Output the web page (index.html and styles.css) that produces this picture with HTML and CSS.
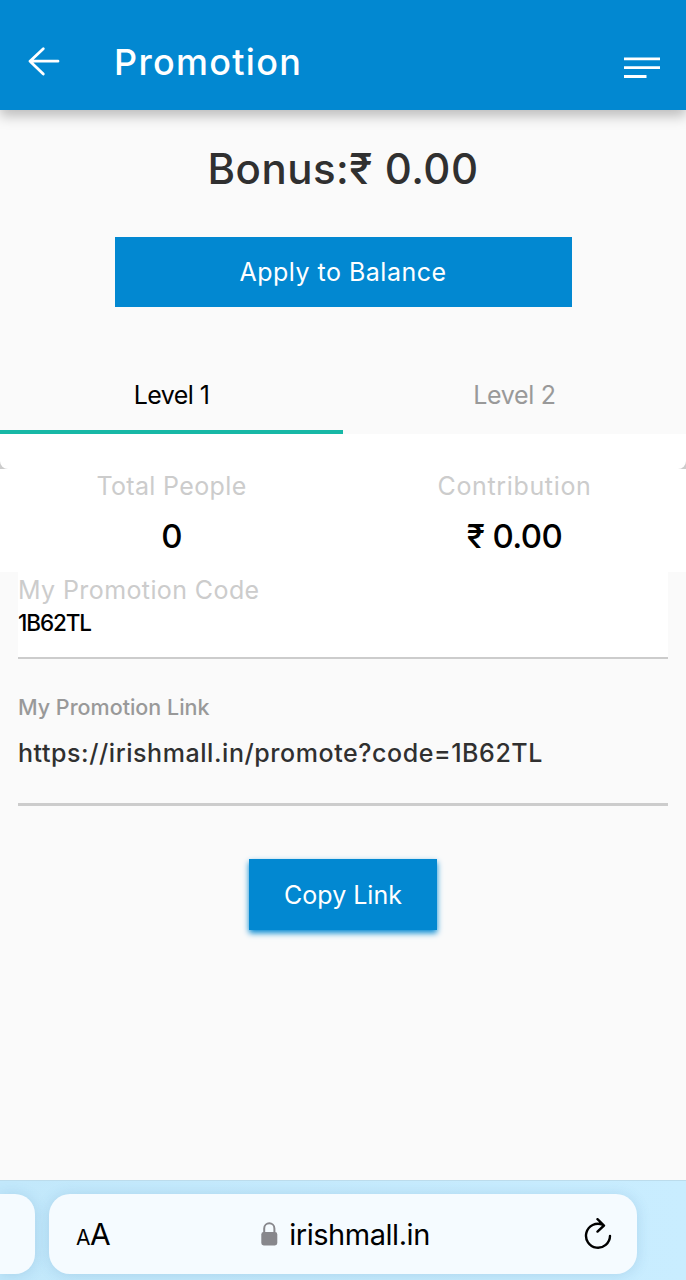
FILE: index.html
```html
<!DOCTYPE html>
<html lang="en">
<head>
    <meta charset="UTF-8">
    <meta name="viewport" content="width=device-width, initial-scale=1.0">
    <title>Promotion</title>
    <link rel="stylesheet" href="styles.css">
</head>
<body>
    <header class="navbar">
        <svg class="back" width="34" height="32" viewBox="0 0 34 32">
            <path d="M17.3 2.7 L4 15.2 L17.3 28 M4 15.2 H32" />
        </svg>
        <h1>Promotion</h1>
        <svg class="menu" width="36" height="22" viewBox="0 0 36 22">
            <path d="M0 1.9 H36 M0 10.7 H36 M0 19.5 H22.5" />
        </svg>
    </header>

    <main>
        <div class="bonus">Bonus:₹ 0.00</div>
        <button class="apply">Apply to Balance</button>

        <div class="tabs">
            <div class="tab active">Level 1</div>
            <div class="tab">Level 2</div>
        </div>
        <div class="edge"><div class="edge-inner"></div></div>

        <div class="stats">
            <div class="stat">
                <div class="label people">Total People</div>
                <div class="value">0</div>
            </div>
            <div class="stat">
                <div class="label contribution">Contribution</div>
                <div class="value">₹ 0.00</div>
            </div>
        </div>

        <div class="code-box">
            <div class="code-label">My Promotion Code</div>
            <div class="code">1B62TL</div>
        </div>

        <div class="link-box">
            <div class="link-label">My Promotion Link</div>
            <div class="link">https://irishmall.in/promote?code=1B62TL</div>
        </div>

        <button class="copy">Copy Link</button>
    </main>

    <footer class="browser">
        <div class="prev-tab"></div>
        <div class="address">
            <div class="aa"><span class="small-a">A</span><span class="big-a">A</span></div>
            <div class="site">
                <svg width="17" height="24" viewBox="0 0 17 24">
                    <path class="shackle" d="M3.2 11 V6.5 C3.2 -.4 13.4 -.4 13.4 6.5 V11" />
                    <rect x="0.3" y="10" width="16" height="13.5" rx="2.4" />
                </svg>
                <span class="domain">irishmall.in</span>
            </div>
            <svg class="reload" width="28" height="34" viewBox="0 0 28 34">
                <path d="M18.5 6.6 A12 12 0 1 0 26 18 M13.5 1.2 L20 7.5 L13.5 13.6" />
            </svg>
        </div>
    </footer>
</body>
</html>
```
FILE: styles.css
```css
* {
    box-sizing: border-box;
}

body {
    font-family: Inter, "Noto Sans", sans-serif;
    background-color: #fafafa;
    margin: 0;
    height: 1280px;
    display: flex;
    flex-direction: column;
    overflow: hidden;
    white-space: nowrap;
}

.navbar {
    height: 110px;
    flex: none;
    background: #0288d1;
    color: white;
    display: flex;
    align-items: center;
    padding: 14px 26px 0;
    box-shadow: 0 6px 12px rgba(0, 0, 0, 0.25);
}

.navbar svg {
    fill: none;
    stroke: white;
    stroke-width: 2.8;
}

.navbar h1 {
    margin: 0 0 0 54px;
    font-size: 36px;
    font-weight: 500;
    line-height: 50px;
    letter-spacing: 1.3px;
    flex: 1;
}

.back {
    stroke-linecap: round;
    stroke-linejoin: round;
}

.menu {
    margin-top: 11px;
}

main {
    flex: 1;
    display: flex;
    flex-direction: column;
}

.bonus {
    margin-top: 34px;
    text-align: center;
    font-size: 42px;
    font-weight: 500;
    line-height: 50px;
    letter-spacing: 0.5px;
    color: #303030;
}

button {
    border: none;
    padding: 0;
    align-self: center;
    background: #0288d1;
    color: white;
    font-family: inherit;
    font-size: 25px;
    height: 70px;
}

.apply {
    width: 457px;
    margin-top: 43px;
    letter-spacing: 0.5px;
}

.tabs {
    display: flex;
    height: 78px;
    margin-top: 49px;
}

.tab {
    flex: 1;
    text-align: center;
    font-size: 25px;
    line-height: 78px;
    letter-spacing: -0.3px;
    color: #999;
}

.active {
    color: black;
    letter-spacing: -0.6px;
    border-bottom: 4px solid #17b8a6;
}

.edge {
    background: #ccc;
    height: 35px;
}

.edge-inner {
    background: white;
    height: 35px;
    border-radius: 0 0 8px 8px;
}

.stats {
    display: flex;
    height: 103px;
    background: white;
}

.stat {
    flex: 1;
    text-align: center;
}

.label {
    font-size: 25px;
    line-height: 35px;
    color: #ccc;
}

.people {
    letter-spacing: 0.35px;
}

.contribution {
    letter-spacing: 0.65px;
}

.value {
    font-size: 33px;
    font-weight: 500;
    line-height: 64px;
    letter-spacing: -0.6px;
}

.code-box {
    margin: 0 18px;
    height: 87px;
    background: white;
    border-bottom: 2px solid #ccc;
}

.code-label {
    font-size: 25px;
    line-height: 36px;
    letter-spacing: 0.4px;
    color: #ccc;
}

.code {
    font-size: 22.5px;
    font-weight: 500;
    line-height: 30px;
    letter-spacing: -1.1px;
}

.link-box {
    margin: 0 18px;
    height: 147px;
    padding-top: 32px;
    border-bottom: 3px solid #ccc;
}

.link-label {
    font-size: 21.5px;
    font-weight: 500;
    line-height: 32px;
    color: #999;
}

.link {
    font-size: 25px;
    font-weight: 500;
    line-height: 61px;
    letter-spacing: 0.56px;
    color: #303030;
}

.copy {
    width: 188px;
    height: 71px;
    margin-top: 53px;
    box-shadow: 0 3px 6px #0288d1;
}

.browser {
    height: 100px;
    flex: none;
    display: flex;
    gap: 14px;
    padding-top: 13px;
    border-top: 1px solid #bcdcec;
    background: linear-gradient(to right, #c2e8fb, #c9edff);
}

.prev-tab {
    width: 35px;
    height: 80px;
    background: #f5fbff;
    border-radius: 0 20px 20px 0;
    box-shadow: 0 1px 14px rgba(50, 110, 160, 0.18);
}

.address {
    width: 588px;
    height: 80px;
    background: #f5fbff;
    border-radius: 21px;
    display: flex;
    align-items: center;
    justify-content: space-between;
    padding: 1px 25px 0 27px;
    box-shadow: 0 1px 14px rgba(50, 110, 160, 0.18);
}

.aa {
    width: 36px;
    line-height: 40px;
    padding-top: 4px;
    letter-spacing: -0.5px;
}

.small-a {
    font-size: 21px;
}

.big-a {
    font-size: 30px;
}

.site {
    display: flex;
    align-items: center;
    gap: 11px;
    font-size: 29px;
    line-height: 40px;
    letter-spacing: -0.45px;
}

.site svg {
    margin-top: -1px;
}

.domain {
    padding-top: 1px;
    margin-right: 5px;
}

.site rect {
    fill: #87878c;
}

.shackle {
    fill: none;
    stroke: #87878c;
    stroke-width: 2;
}

.reload {
    fill: none;
    stroke: black;
    stroke-width: 2.4;
    stroke-linecap: round;
    stroke-linejoin: round;
}
```
